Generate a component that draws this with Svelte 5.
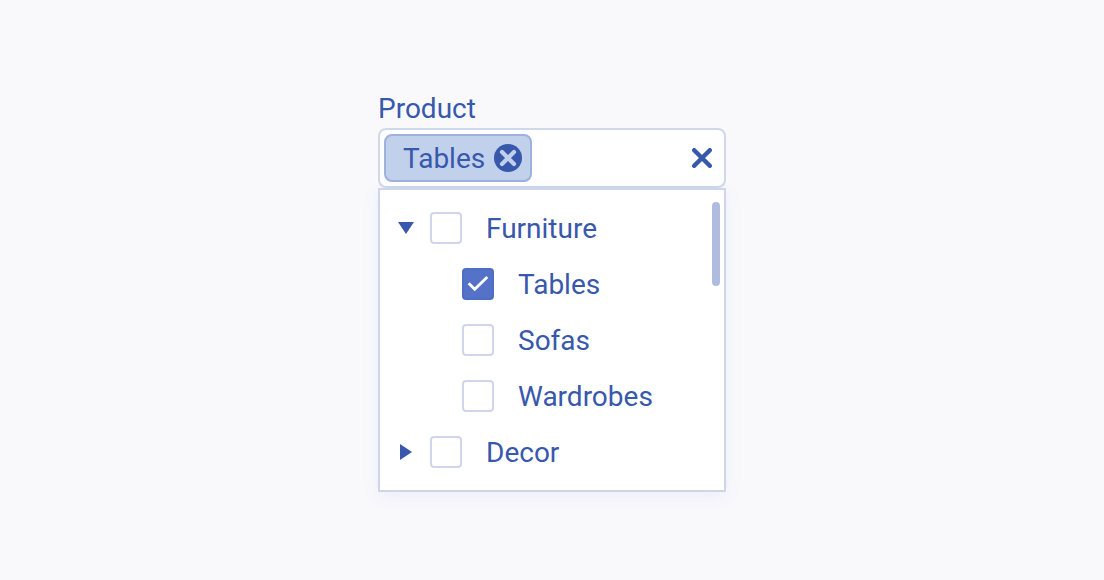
<script>
  let open = $state({ furniture: true, decor: false });
  let checked = $state({ furniture: false, tables: true, sofas: false, wardrobes: false, decor: false });
  let query = $state('');

  const groups = [
    {
      id: 'furniture',
      label: 'Furniture',
      items: [
        { id: 'tables', label: 'Tables' },
        { id: 'sofas', label: 'Sofas' },
        { id: 'wardrobes', label: 'Wardrobes' }
      ]
    },
    { id: 'decor', label: 'Decor', items: [] }
  ];

  const options = groups.flatMap((g) => [g, ...g.items]);
  let selected = $derived(options.filter((o) => checked[o.id]));

  function clear() {
    for (const o of options) checked[o.id] = false;
    query = '';
  }
</script>

{#snippet option(item)}
  <label class="option">
    <input type="checkbox" bind:checked={checked[item.id]} />
    <span class="text">{item.label}</span>
  </label>
{/snippet}

<main>
  <div class="select">
    <label class="text" for="product">Product</label>
    <div class="field">
      {#each selected as item (item.id)}
        <span class="tag">
          <span class="text">{item.label}</span>
          <button type="button" aria-label="Remove {item.label}" onclick={() => (checked[item.id] = false)}>
            <svg width="28" height="28" viewBox="0 0 28 28" aria-hidden="true">
              <circle cx="14" cy="14" r="14" fill="#3858ac" />
              <path d="M8 8 20 20M20 8 8 20" stroke="#c1d0eb" stroke-width="4.2" stroke-linecap="round" />
            </svg>
          </button>
        </span>
      {/each}
      <input id="product" class="query" type="text" autocomplete="off" bind:value={query} />
      <button class="clear" type="button" aria-label="Clear all" onclick={clear}>
        <svg width="20" height="20" viewBox="0 0 20 20" aria-hidden="true">
          <path d="M2.2 2.2 17.8 17.8M17.8 2.2 2.2 17.8" stroke="#3858ac" stroke-width="4.4" stroke-linecap="round" />
        </svg>
      </button>
    </div>
    <div class="panel">
      <ul>
        {#each groups as group (group.id)}
          <li>
            <div class="row">
              <button
                class="toggle"
                type="button"
                aria-label="Toggle {group.label}"
                aria-expanded={open[group.id]}
                onclick={() => (open[group.id] = !open[group.id])}
              >
                <svg width="16" height="16" viewBox="0 0 16 16" fill="#3858ac" aria-hidden="true">
                  {#if open[group.id]}
                    <path d="M0 2H16L8 14Z" />
                  {:else}
                    <path d="M2 0V16L14 8Z" />
                  {/if}
                </svg>
              </button>
              {@render option(group)}
            </div>
            {#if open[group.id] && group.items.length}
              <ul class="children">
                {#each group.items as item (item.id)}
                  <li class="row">{@render option(item)}</li>
                {/each}
              </ul>
            {/if}
          </li>
        {/each}
      </ul>
      <div class="thumb"></div>
    </div>
  </div>
</main>

<style>
  :global(body) {
    margin: 0;
    background: #f9f9fc;
  }
  main {
    display: grid;
    place-items: center;
    min-height: 100vh;
    color: #3858ac;
    font: 28px/38px Roboto, sans-serif;
  }
  .select {
    width: 100%;
    max-width: 348px;
  }
  .text {
    display: block;
    padding-top: 2px;
  }
  button {
    display: flex;
    flex: none;
    padding: 0;
    border: 0;
    background: none;
    cursor: pointer;
  }
  .field {
    display: flex;
    align-items: center;
    padding: 4px 12px 4px 4px;
    border: 2px solid #cfd9ea;
    border-radius: 8px;
    background: #fff;
  }
  .tag {
    display: flex;
    align-items: center;
    gap: 9px;
    padding: 2px 8px 2px 17px;
    border: 2px solid #a0b1dd;
    border-radius: 8px;
    background: #c1d0eb;
  }
  .query {
    flex: 1;
    min-width: 0;
    height: 48px;
    padding: 0 8px;
    border: 0;
    outline: 0;
    background: none;
    color: inherit;
    font: inherit;
    box-sizing: border-box;
  }
  .panel {
    position: relative;
    padding: 10px 18px;
    border: 2px solid #cfd6ea;
    background: #fff;
    box-shadow: 0 4px 16px rgba(80, 90, 220, 0.08);
  }
  ul {
    margin: 0;
    padding: 0;
    list-style: none;
  }
  .row {
    display: flex;
    align-items: center;
    gap: 16px;
    height: 56px;
  }
  .children {
    padding-left: 64px;
  }
  .option {
    display: flex;
    align-items: center;
    gap: 24px;
    cursor: pointer;
  }
  .option input {
    appearance: none;
    flex: none;
    width: 32px;
    height: 32px;
    margin: 0;
    border: 2px solid #cfd6ea;
    border-radius: 4px;
    background: #fff;
  }
  .option input:checked {
    border-color: #4f6dc3;
    background: #5472c8 url("data:image/svg+xml,%3Csvg xmlns='http://www.w3.org/2000/svg' viewBox='0 0 28 28'%3E%3Cpath d='M4.7 13.3 10.7 19.3 23.3 7' fill='none' stroke='white' stroke-width='2.8'/%3E%3C/svg%3E") center / 28px no-repeat;
  }
  .thumb {
    position: absolute;
    top: 12px;
    right: 4px;
    width: 8px;
    height: 84px;
    border-radius: 4px;
    background: #afbbdf;
  }
</style>
